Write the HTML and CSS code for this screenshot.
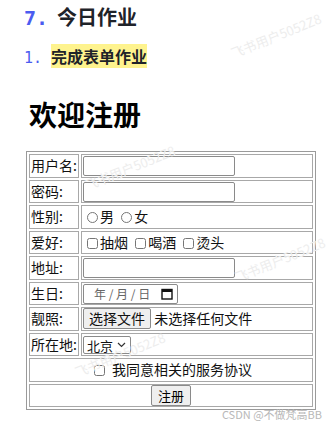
FILE: index.html
```html
<!DOCTYPE html>
<html lang="zh-CN">
<head>
    <meta charset="UTF-8">
    <title>欢迎注册</title>
    <link rel="stylesheet" href="styles.css">
</head>
<body>
    <div class="note">
        <div class="note-title"><span class="num">7.</span>今日作业</div>
        <div class="note-item"><span class="num">1.</span><mark>完成表单作业</mark></div>
    </div>

    <div class="page">
        <h1>欢迎注册</h1>
        <table class="form">
            <tr>
                <td class="label">用户名:</td>
                <td><input type="text" class="text-input"></td>
            </tr>
            <tr>
                <td class="label">密码:</td>
                <td><input type="password" class="text-input"></td>
            </tr>
            <tr>
                <td class="label">性别:</td>
                <td><input type="radio" name="sex">男 <input type="radio" name="sex">女</td>
            </tr>
            <tr>
                <td class="label">爱好:</td>
                <td><input type="checkbox">抽烟 <input type="checkbox">喝酒 <input type="checkbox">烫头</td>
            </tr>
            <tr>
                <td class="label">地址:</td>
                <td><input type="text" class="text-input"></td>
            </tr>
            <tr>
                <td class="label">生日:</td>
                <td>
                    <span class="date-input">
                        <span class="date-text">年 / 月 / 日</span>
                        <svg width="12" height="12" viewBox="0 0 12 12"><rect x="1" y="1.5" width="10" height="9.5" fill="none" stroke="#111" stroke-width="1.4"/><rect x="1" y="1.5" width="10" height="2.5" fill="#111"/></svg>
                    </span>
                </td>
            </tr>
            <tr>
                <td class="label">靓照:</td>
                <td><span class="file-btn">选择文件</span> 未选择任何文件</td>
            </tr>
            <tr>
                <td class="label">所在地:</td>
                <td>
                    <span class="city">北京<svg width="9" height="6" viewBox="0 0 9 6"><path d="M1 1l3.5 3.5L8 1" fill="none" stroke="#333" stroke-width="1.2"/></svg></span>
                </td>
            </tr>
            <tr>
                <td colspan="2" class="center"><input type="checkbox"> 我同意相关的服务协议</td>
            </tr>
            <tr>
                <td colspan="2" class="center"><button class="submit">注册</button></td>
            </tr>
        </table>
    </div>

    <div class="mark m1">飞书用户5052Z8</div>
    <div class="mark m2">飞书用户5052Z8</div>
    <div class="mark m3">飞书用户5052Z8</div>
    <div class="mark m4">飞书用户5052Z8</div>
    <div class="footer">CSDN @不做梵高BB</div>
</body>
</html>
```

FILE: styles.css
```css
html {
    overflow: hidden;
}
body {
    margin: 0;
    font-family: "Noto Sans CJK SC", "Noto Sans", sans-serif;
    color: #111;
    position: relative;
    height: 429px;
    overflow: hidden;
}
.note {
    padding: 3px 0 0 24px;
}
.note .num {
    font-family: "DejaVu Sans Mono", monospace;
    color: #4b5cf0;
}
.note-title {
    font-size: 20px;
    font-weight: bold;
    line-height: 28px;
    color: #1f2329;
}
.note-title .num {
    margin-right: 9px;
}
.note-item {
    margin-top: 13px;
    font-size: 16px;
    font-weight: bold;
    line-height: 23px;
}
.note-item .num {
    font-weight: normal;
    font-size: 15px;
    margin-right: 9px;
}
mark {
    background: #fef38e;
    color: #1f2329;
}
.page {
    padding: 0 0 0 28px;
}
h1 {
    font-size: 28px;
    font-weight: bold;
    margin: 25px 0 18px 1px;
    line-height: 38px;
    color: #000;
}
.form {
    border: 1px solid #9a9a9a;
    border-spacing: 2px;
    width: 290px;
    font-size: 14px;
    margin-left: -2px;
}
.form td {
    border: 1px solid #a8a8a8;
    padding: 0 1px;
    height: 21.5px;
    line-height: 19px;
    white-space: nowrap;
    vertical-align: middle;
}
.form td.label {
    width: 46px;
}
.text-input {
    width: 152px;
    height: 20px;
    box-sizing: border-box;
    border: 1px solid #8a8a8a;
    border-radius: 2px;
    margin: 0;
    vertical-align: middle;
}
input[type=radio], input[type=checkbox] {
    width: 11px;
    height: 11px;
    margin: 0 2px 0 4px;
    vertical-align: -1px;
}
.date-input {
    display: inline-flex;
    align-items: center;
    justify-content: space-between;
    width: 95px;
    height: 20px;
    box-sizing: border-box;
    border: 1px solid #8a8a8a;
    border-radius: 2px;
    padding: 0 4px 0 10px;
    vertical-align: middle;
    font-size: 12px;
    color: #666;
}
.file-btn {
    display: inline-block;
    background: #efefef;
    border: 1px solid #8a8a8a;
    border-radius: 2px;
    padding: 0 5px;
    line-height: 19px;
    color: #111;
}
.city {
    display: inline-flex;
    align-items: center;
    gap: 4px;
    font-size: 13px;
    height: 18px;
    box-sizing: border-box;
    padding: 0 4px 0 3px;
    border: 1px solid #8a8a8a;
    border-radius: 2px;
    background: #fff;
    vertical-align: middle;
}
.center {
    text-align: center;
}
.center input[type=checkbox] {
    margin-right: 4px;
}
.submit {
    font-family: inherit;
    font-size: 13px;
    line-height: 17px;
    background: #efefef;
    border: 1px solid #8a8a8a;
    border-radius: 2px;
    padding: 0 6px;
    height: 21px;
    vertical-align: middle;
}
.mark {
    position: absolute;
    color: #ededed;
    font-size: 13px;
    transform: rotate(-22deg);
    pointer-events: none;
    white-space: nowrap;
}
.m1 { left: 228px; top: 26px; }
.m2 { left: 82px; top: 158px; }
.m3 { left: 232px; top: 250px; }
.m4 { left: 72px; top: 345px; }
.footer {
    position: absolute;
    right: 12px;
    top: 406px;
    font-size: 11px;
    color: #b8b8b8;
}
```
